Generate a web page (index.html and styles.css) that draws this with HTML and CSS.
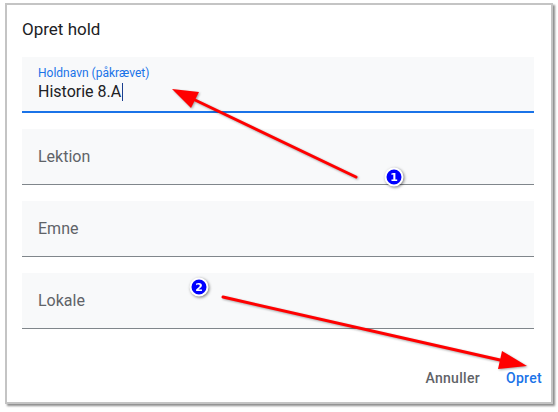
FILE: index.html
```html
<!DOCTYPE html>
<html lang="da">
<head>
  <meta charset="UTF-8">
  <meta name="viewport" content="width=device-width, initial-scale=1.0">
  <title>Opret hold</title>
  <link rel="stylesheet" href="styles.css">
</head>
<body>
  <div class="dialog">
    <h2 class="dialog-title">Opret hold</h2>

    <div class="fields">
      <div class="field active">
        <span class="field-label">Holdnavn (påkrævet)</span>
        <span class="field-value">Historie 8.A<span class="caret"></span></span>
      </div>
      <div class="field">
        <span class="placeholder">Lektion</span>
      </div>
      <div class="field">
        <span class="placeholder">Emne</span>
      </div>
      <div class="field">
        <span class="placeholder">Lokale</span>
      </div>
    </div>

    <div class="actions">
      <button class="btn">Annuller</button>
      <button class="btn primary">Opret</button>
    </div>
  </div>

  <!-- callouts drawn on top of the screenshot -->
  <svg class="annotations" width="558" height="412" viewBox="0 0 558 412">
    <g class="arrow">
      <line x1="356" y1="177" x2="195" y2="100" />
      <polygon points="172,89 199,92 191,108" />
    </g>
    <g class="arrow">
      <line x1="223" y1="297" x2="500" y2="360" />
      <polygon points="527,366 502,351 498,369" />
    </g>
    <g class="badge">
      <circle cx="394" cy="177" r="8.5" />
      <text x="394" y="181">1</text>
    </g>
    <g class="badge">
      <circle cx="199" cy="287" r="8.5" />
      <text x="199" y="291">2</text>
    </g>
  </svg>
</body>
</html>
```

FILE: styles.css
```css
body {
  margin: 0;
  padding: 0;
  position: relative;
  width: 558px;
  height: 412px;
  background: #fff;
  font-family: Roboto, "Liberation Sans", Arial, sans-serif;
  overflow: hidden;
}
.dialog {
  box-sizing: border-box;
  margin: 3px 0 0 5px;
  width: 548px;
  height: 401px;
  padding: 12px 17px 6px 15px;
  background: #fff;
  border: 2px solid #c4c4c4;
  box-shadow: 2px 2px 2px rgba(0, 0, 0, 0.45);
  display: flex;
  flex-direction: column;
}
.dialog-title {
  margin: 0 0 16px;
  font-size: 17px;
  line-height: 24px;
  font-weight: 400;
  color: #202124;
}
.fields {
  display: flex;
  flex-direction: column;
  gap: 16px;
}
.field {
  box-sizing: border-box;
  height: 56px;
  padding: 0 16px;
  background: #f8f9fa;
  border-bottom: 1px solid #80868b;
  display: flex;
  align-items: center;
}
.field.active {
  flex-direction: column;
  align-items: flex-start;
  padding-top: 8px;
  border-bottom: 2px solid #1a73e8;
}
.field-label {
  font-size: 12px;
  line-height: 16px;
  color: #1a73e8;
}
.field-value {
  font-size: 16px;
  line-height: 22px;
  color: #202124;
  display: flex;
  align-items: center;
}
.caret {
  display: inline-block;
  width: 1px;
  height: 18px;
  margin-left: 1px;
  background: #1b3f8f;
}
.placeholder {
  font-size: 16px;
  color: #5f6368;
}
.actions {
  margin-top: auto;
  margin-right: -16px;
  display: flex;
  justify-content: flex-end;
  gap: 10px;
}
.btn {
  height: 36px;
  padding: 0 8px;
  border: none;
  background: none;
  font-family: Roboto, "Liberation Sans", Arial, sans-serif;
  font-size: 14px;
  font-weight: 500;
  letter-spacing: 0.3px;
  color: #5f6368;
  cursor: pointer;
}
.btn.primary {
  color: #1a73e8;
}
.annotations {
  position: absolute;
  top: 0;
  left: 0;
  pointer-events: none;
}
.arrow {
  filter: drop-shadow(1px 1px 1px rgba(0, 0, 0, 0.35));
}
.arrow line {
  stroke: #ff0000;
  stroke-width: 3;
  stroke-linecap: round;
}
.arrow polygon {
  fill: #ff0000;
}
.badge {
  filter: drop-shadow(1px 1px 1.5px rgba(0, 0, 0, 0.5));
}
.badge circle {
  fill: #0000ff;
  stroke: #fff;
  stroke-width: 2;
}
.badge text {
  fill: #fff;
  font-family: "DejaVu Sans", Verdana, sans-serif;
  font-size: 11px;
  font-weight: 700;
  text-anchor: middle;
}
```
